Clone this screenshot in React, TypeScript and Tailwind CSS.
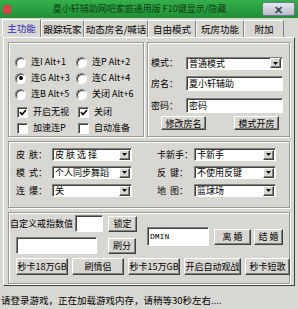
import React from 'react';

const sunken =
  'border border-t-[#808080] border-l-[#808080] border-b-white border-r-white shadow-[inset_1px_1px_0_#404040] bg-white';
const raised =
  'border border-t-white border-l-white border-b-[#404040] border-r-[#404040] shadow-[inset_-1px_-1px_0_#808080] bg-[#d9d7d2]';
const groupBox = 'border border-[#9c9a96] shadow-[inset_1px_1px_0_#fff,1px_1px_0_#fff]';

const Radio: React.FC<{ checked?: boolean; label: string }> = ({ checked, label }) => (
  <div className="flex items-center h-[16px]">
    <span className="w-[11px] h-[11px] shrink-0 rounded-full bg-white border border-t-[#808080] border-l-[#808080] border-b-white border-r-white shadow-[inset_1px_1px_0_#404040] flex items-center justify-center">
      {checked && <span className="w-[4px] h-[4px] rounded-full bg-black" />}
    </span>
    <span className="ml-[5px] whitespace-nowrap">{label}</span>
  </div>
);

const Check: React.FC<{ checked?: boolean; label: string }> = ({ checked, label }) => (
  <div className="flex items-center h-[16px]">
    <span className={`w-[11px] h-[11px] shrink-0 ${sunken} flex items-center justify-center`}>
      {checked && (
        <svg width="8" height="7" viewBox="0 0 8 7">
          <path d="M1 3 L3 5.5 L7 1" stroke="#000" strokeWidth="1.6" fill="none" />
        </svg>
      )}
    </span>
    <span className="ml-[5px] whitespace-nowrap">{label}</span>
  </div>
);

const Combo: React.FC<{ value: string; w: string }> = ({ value, w }) => (
  <div className={`${w} h-[13px] ${sunken} flex items-center shrink-0`}>
    <span className="flex-1 pl-[2px] leading-[11px] whitespace-pre">{value}</span>
    <span className={`w-[11px] h-[10px] mr-[1px] ${raised} flex items-center justify-center`}>
      <svg width="5" height="3" viewBox="0 0 5 3">
        <path d="M0 0 H5 L2.5 3 Z" fill="#000" />
      </svg>
    </span>
  </div>
);

const Btn: React.FC<{ label: string; w: string; h?: string }> = ({ label, w, h = 'h-[15px]' }) => (
  <div className={`${w} ${h} shrink-0 ${raised} flex items-center justify-center whitespace-pre leading-[11px]`}>
    {label}
  </div>
);

const Label: React.FC<{ text: string; w: string }> = ({ text, w }) => (
  <span className={`${w} shrink-0 whitespace-pre`}>{text}</span>
);

const tabs = [
  { label: '主功能', w: 'w-[39px]', active: true },
  { label: '跟踪玩家', w: 'w-[43px]' },
  { label: '动态房名/喊话', w: 'w-[64px]' },
  { label: '自由模式', w: 'w-[48px]' },
  { label: '玩房功能', w: 'w-[48px]' },
  { label: '附加', w: 'w-[40px]' },
];

export default function App() {
  return (
    <div className="w-[298px] h-[309px] overflow-hidden bg-[#d9d7d2] flex flex-col text-[9px] text-black font-['SimSun','Noto_Sans_CJK_SC',sans-serif]">
      {/* title bar */}
      <div className="h-[18px] bg-gradient-to-b from-[#35b04a] to-[#1f8f36] flex items-center">
        <span className="ml-[3px] w-[8px] h-[9px] rounded-[2px] bg-[#d9414a]" />
        <span className="flex-1 text-center text-[#0f3f16] pl-[6px] whitespace-nowrap">夏小轩辅助网吧家庭通用版 F10键显示/隐藏</span>
        <span className="mr-[3px] w-[33px] h-[14px] rounded-[2px] border border-[#6d7a8a] bg-gradient-to-b from-[#e6e8ee] to-[#b7bdc8] flex items-center justify-center text-[#3b4556] text-[11px] font-bold leading-none">
          ✕
        </span>
      </div>

      {/* tabs */}
      <div className="h-[19px] flex items-end pl-[2px] pt-[1px]">
        {tabs.map((t) => (
          <div
            key={t.label}
            className={`${t.w} border border-t-white border-l-white border-r-[#808080] border-b-0 flex items-center justify-center whitespace-nowrap text-[9.5px] ${
              t.active ? 'text-[#2a2ab8] h-[18px]' : 'h-[17px]'
            }`}
          >
            {t.label}
          </div>
        ))}
      </div>

      {/* content panel */}
      <div className="mx-[3px] h-[249px] border border-t-white border-l-white border-b-[#404040] border-r-[#404040] px-[4px] pt-[4px] flex flex-col gap-[4px]">
        {/* section 1 */}
        <div className="flex gap-[3px] h-[95px]">
          <div className={`w-[136px] ${groupBox} pl-[6px] pt-[11px]`}>
            <div className="grid grid-cols-[61px_1fr]">
              <Radio label="连I Alt+1" />
              <Radio label="连P Alt+2" />
              <Radio checked label="连G Alt+3" />
              <Radio label="连C Alt+4" />
              <Radio label="连B Alt+5" />
              <Radio label="关闭 Alt+6" />
            </div>
            <div className="grid grid-cols-[61px_1fr] mt-[2px] pl-[2px]">
              <Check checked label="开启无视" />
              <Check checked label="关闭" />
              <Check label="加速连P" />
              <Check label="自动准备" />
            </div>
          </div>
          <div className={`flex-1 ${groupBox} pl-[3px] pt-[13px] flex flex-col`}>
            <div className="flex items-center h-[14px]">
              <Label text="模式：" w="w-[35px]" />
              <Combo value="普通模式" w="w-[97px]" />
            </div>
            <div className="flex items-center h-[15px] mt-[6px]">
              <Label text="房名：" w="w-[35px]" />
              <div className={`w-[97px] h-[15px] ${sunken} pl-[2px] flex items-center`}>夏小轩辅助</div>
            </div>
            <div className="flex items-center h-[15px] mt-[7px]">
              <Label text="密码：" w="w-[35px]" />
              <div className={`w-[97px] h-[15px] ${sunken} pl-[2px] flex items-center`}>密码</div>
            </div>
            <div className="flex h-[14px] mt-[3px] pl-[10px] gap-[28px]">
              <Btn label="修改房名" w="w-[45px]" h="h-[14px]" />
              <Btn label="模式开房" w="w-[45px]" h="h-[14px]" />
            </div>
          </div>
        </div>

        {/* section 2 */}
        <div className={`h-[67px] ${groupBox} pt-[6px] flex`}>
          <div className="w-[143px] pl-[7px] flex flex-col gap-[5px]">
            <div className="flex items-center h-[13px]">
              <Label text="皮  肤：" w="w-[36px]" />
              <Combo value="皮 肤 选 择" w="w-[80px]" />
            </div>
            <div className="flex items-center h-[13px]">
              <Label text="模  式：" w="w-[36px]" />
              <Combo value="个人同步舞蹈" w="w-[80px]" />
            </div>
            <div className="flex items-center h-[13px]">
              <Label text="连  爆：" w="w-[36px]" />
              <Combo value="关" w="w-[80px]" />
            </div>
          </div>
          <div className="flex-1 pl-[5px] flex flex-col gap-[5px]">
            <div className="flex items-center h-[13px]">
              <Label text="卡新手：" w="w-[37px]" />
              <Combo value="卡新手" w="w-[82px]" />
            </div>
            <div className="flex items-center h-[13px]">
              <Label text="反  键：" w="w-[37px]" />
              <Combo value="不使用反键" w="w-[82px]" />
            </div>
            <div className="flex items-center h-[13px]">
              <Label text="地  图：" w="w-[37px]" />
              <Combo value="篮球场" w="w-[82px]" />
            </div>
          </div>
        </div>

        {/* section 3 */}
        <div className={`h-[72px] ${groupBox} pt-[2px] pl-[1px] flex flex-col`}>
          <div className="flex">
            <div className="w-[133px] flex flex-col gap-[5px]">
              <div className="flex items-center h-[17px]">
                <span className="whitespace-nowrap w-[65px] shrink-0">自定义戒指数值</span>
                <div className={`w-[28px] h-[17px] shrink-0 ${sunken}`} />
                <div className="w-[5px]" />
                <Btn label="锁定" w="w-[29px]" h="h-[16px]" />
              </div>
              <div className="flex items-center h-[17px] pl-[6px] gap-[11px]">
                <div className={`w-[81px] h-[17px] shrink-0 ${sunken}`} />
                <Btn label="刷分" w="w-[28px]" h="h-[16px]" />
              </div>
            </div>
            <div className="flex-1 flex items-center pl-[4px] pt-[4px]">
              <div className={`w-[62px] h-[19px] shrink-0 ${sunken} pl-[2px] flex items-center text-[8px] font-['Liberation_Mono',monospace]`}>
                DMIN
              </div>
              <div className="w-[5px]" />
              <Btn label="离 婚" w="w-[37px]" h="h-[16px]" />
              <div className="w-[3px]" />
              <Btn label="结 婚" w="w-[29px]" h="h-[16px]" />
            </div>
          </div>
          <div className="flex items-center mt-[4px] pl-[6px] gap-[4px]">
            <Btn label="秒卡18万GB" w="w-[52px]" h="h-[17px]" />
            <Btn label="刷情侣" w="w-[52px]" h="h-[17px]" />
            <Btn label="秒卡15万GB" w="w-[52px]" h="h-[17px]" />
            <Btn label="开启自动观战" w="w-[57px]" h="h-[17px]" />
            <Btn label="秒卡短歌" w="w-[45px]" h="h-[17px]" />
          </div>
        </div>
      </div>

      {/* status */}
      <div className="pl-[1px] pt-[7px] whitespace-nowrap text-[9.5px]">请登录游戏，正在加载游戏内存，请稍等30秒左右....</div>
    </div>
  );
}
